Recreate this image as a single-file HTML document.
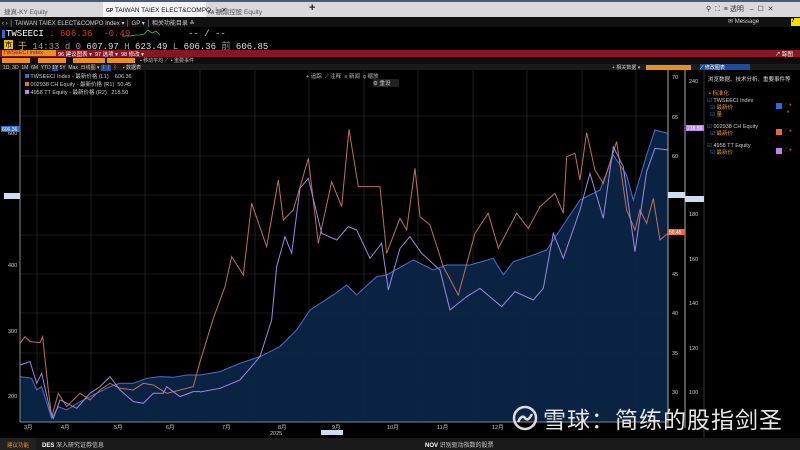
<!DOCTYPE html>
<html><head><meta charset="utf-8"><style>
*{margin:0;padding:0;box-sizing:border-box}
body{width:800px;height:450px;background:#000;overflow:hidden;position:relative;font-family:"Liberation Sans","Noto Sans CJK SC",sans-serif;color:#ddd}
.a{position:absolute;white-space:nowrap}
.t{font-size:6px}
</style></head><body>
<!-- tab bar -->
<div class="a" style="left:0;top:0;width:800px;height:17px;background:#d9d9d9;border-top:2px solid #4a5a7a"></div>
<div class="a t" style="left:4px;top:6px;color:#555;font-size:6.5px">捷真-KY Equity</div>
<div class="a" style="left:103px;top:2px;width:103px;height:15px;background:#f4f4f4"></div>
<div class="a t" style="left:106px;top:6px;color:#111;font-size:6.5px"><b style="font-size:5px">GP</b> TAIWAN TAIEX ELECT&amp;COMPO ⋮ ✕</div>
<div class="a t" style="left:208px;top:6px;color:#555;font-size:6.5px"><b style="font-size:5px">FA</b> 鵬鼎控股 Equity</div>
<div class="a" style="left:309px;top:2px;color:#222;font-size:11px;font-weight:bold">+</div>
<div class="a t" style="left:706px;top:4px;color:#333;font-size:7px">⚲ &nbsp;⛶ &nbsp;≡ 透明 &nbsp;&nbsp;– &nbsp;☐ &nbsp;✕</div>
<!-- nav -->
<div class="a" style="left:0;top:17px;width:800px;height:10px;background:#111"></div>
<div class="a t" style="left:2px;top:18px;color:#ccc">‹ › │ TAIWAN TAIEX ELECT&amp;COMPO Index ▾ │ GP ▾ │ 相关功能目录 ≚</div>
<div class="a t" style="left:728px;top:18px;color:#ccc">✉ Message</div>
<div class="a" style="left:791px;top:18px;width:9px;height:8px;background:#f0e000;color:#000;font-size:6px;font-weight:bold">?</div>
<!-- ticker -->
<div class="a" style="left:2px;top:30px;width:3px;height:8px;background:#2a6ed0"></div>
<div class="a" style="left:6px;top:29px;font-size:9px;color:#fff;font-family:'Liberation Mono',monospace">TWSEECI <span style="color:#e03030">↓ 606.36 &nbsp;-0.49</span></div>
<svg class="a" style="left:122px;top:29px" width="40" height="9"><polyline points="0,7 8,7 14,6 18,6 22,5 26,1 30,4 34,2 38,6" fill="none" stroke="#3c3" stroke-width=".8"/></svg>
<div class="a" style="left:188px;top:29px;font-size:9px;color:#ccc;font-family:'Liberation Mono',monospace">-- / --</div>
<div class="a" style="left:4px;top:40px;width:9px;height:9px;background:#e8c000;color:#000;font-size:7px;text-align:center">市</div>
<div class="a" style="left:18px;top:39px;font-size:9px;color:#ddd;font-family:'Liberation Mono',monospace"><span style="color:#e8c000">于</span> <span style="color:#999">14:33 d 0</span> 607.97 <span style="color:#999">H</span> 623.49 <span style="color:#999">L</span> 606.36 <span style="color:#999">前</span> 606.85</div>
<!-- red bar -->
<div class="a" style="left:0;top:50px;width:800px;height:7px;background:#8a1624"></div>
<div class="a" style="left:2px;top:50px;width:54px;height:6px;background:#e89020"></div>
<div class="a" style="left:3px;top:50px;font-size:5.5px;color:#8a1624">TWSEECI Index</div>
<div class="a" style="left:58px;top:50px;font-size:5.5px;color:#fff">96 建议图表 ▾ &nbsp;97 选项 ▾ &nbsp;98 修改 ▾</div>
<div class="a" style="left:775px;top:50px;font-size:5.5px;color:#fff">↗ 踪图</div>
<!-- toolbar -->
<div class="a" style="left:0;top:57px;width:800px;height:7px;background:#0d0d0d"></div>
<div class="a" style="left:2px;top:58px;width:28px;height:5px;background:#e89020"></div>
<div class="a" style="left:38px;top:58px;width:28px;height:5px;background:#e89020"></div>
<div class="a" style="left:73px;top:58px;width:32px;height:5px;background:#e89020"></div>
<div class="a" style="left:107px;top:58px;width:28px;height:5px;background:#e89020"></div>
<div class="a" style="left:140px;top:57px;font-size:5px;color:#bbb">▪ 移动平均 ⟋ &nbsp;▪ 重要事件</div>
<div class="a" style="left:0;top:64px;width:800px;height:6px;background:#1a1a1a"></div>
<div class="a" style="left:3px;top:64px;font-size:5px;color:#ccc">1D &nbsp;3D &nbsp;1M &nbsp;6M &nbsp;YTD <span style="background:#1e4d9a">1Y</span> 5Y &nbsp;Max &nbsp;日线图 ▾ <span style="background:#1e4d9a">⌇⌇</span> ⌇ &nbsp;&nbsp;&nbsp;▪ 数据表</div>
<div class="a" style="left:612px;top:64px;font-size:5px;color:#ccc">+ 相关数据 ▾</div>
<div class="a" style="left:646px;top:65px;width:45px;height:5px;background:#e89020"></div>
<div class="a" style="left:700px;top:64px;width:50px;height:6px;background:#1e4d9a;font-size:5px;color:#fff">⟋ 修改图表</div>
<!-- chart -->
<svg class="a" style="left:0;top:70px" width="705" height="368" viewBox="0 70 705 368">
<g stroke="#333" stroke-width=".6">
<line x1="20" y1="116" x2="668" y2="116"/><line x1="20" y1="156" x2="668" y2="156"/><line x1="20" y1="195" x2="668" y2="195"/><line x1="20" y1="235" x2="668" y2="235"/><line x1="20" y1="274" x2="668" y2="274"/><line x1="20" y1="313" x2="668" y2="313"/><line x1="20" y1="353" x2="668" y2="353"/><line x1="20" y1="392" x2="668" y2="392"/>
<line x1="37" y1="70" x2="37" y2="422"/><line x1="91" y1="70" x2="91" y2="422"/><line x1="145" y1="70" x2="145" y2="422"/><line x1="200" y1="70" x2="200" y2="422"/><line x1="255" y1="70" x2="255" y2="422"/><line x1="309" y1="70" x2="309" y2="422"/><line x1="364" y1="70" x2="364" y2="422"/><line x1="418" y1="70" x2="418" y2="422"/><line x1="473" y1="70" x2="473" y2="422"/><line x1="527" y1="70" x2="527" y2="422"/><line x1="582" y1="70" x2="582" y2="422"/><line x1="636" y1="70" x2="636" y2="422"/>
</g>
<g transform="translate(0,100) scale(0.3333)">
<polygon fill="#0c2547" fill-opacity=".95" stroke="none" points="60,966 60,830 95,835 110,870 125,860 155,955 175,920 200,930 240,905 280,885 330,860 360,850 400,850 440,835 480,830 520,832 560,825 601,825 601,966"/>
<polyline fill="none" stroke="#4a6fd0" stroke-width="3" points="60,830 95,835 110,870 125,860 155,955 175,920 200,930 240,905 280,885 330,860 360,850 400,850 440,835 480,830 520,832 560,825 600,825"/>
<polyline fill="none" stroke="#c0705a" stroke-width="3" points="60,730 75,710 90,725 120,728 128,710 145,870 155,950 175,880 200,920 240,880 270,900 300,870 330,850 360,865 400,870 430,850 460,855 500,880 540,870 580,860 600,785"/>
<polyline fill="none" stroke="#9a88e0" stroke-width="3" points="60,795 90,785 110,850 125,820 150,930 160,955 180,900 230,925 270,880 300,860 330,830 360,870 400,905 430,910 460,880 490,880 500,860 540,890 580,875 600,875"/>
</g>
<g transform="translate(200,100) scale(0.3333)">
<polygon fill="#0c2547" fill-opacity=".95" stroke="none" points="0,966 0,825 60,815 120,790 180,770 240,740 290,690 330,630 400,585 440,555 470,585 530,530 560,525 640,480 700,510 740,495 810,495 880,475 910,525 940,485 1000,465 1040,450 1090,375 1140,300 1200,270 1240,165 1280,225 1300,300 1340,165 1365,90 1404,100 1404,966"/>
<polyline fill="none" stroke="#4a6fd0" stroke-width="3" points="0,825 60,815 120,790 180,770 240,740 290,690 330,630 400,585 440,555 470,585 530,530 560,525 640,480 700,510 740,495 810,495 880,475 910,525 940,485 1000,465 1040,450 1090,375 1140,300 1200,270 1240,165 1280,225 1300,300 1340,165 1365,90 1404,100"/>
<polyline fill="none" stroke="#c0705a" stroke-width="3" points="0,786 40,655 75,560 95,470 130,525 155,310 200,440 235,240 250,360 280,330 325,175 355,430 395,245 425,320 447,88 475,260 540,260 560,460 600,355 620,390 645,205 660,350 690,375 730,500 775,585 825,400 865,340 895,445 950,340 985,385 1020,320 1065,280 1090,340 1100,170 1125,160 1140,240 1160,98 1185,210 1210,250 1250,125 1280,330 1305,390 1320,330 1340,370 1360,295 1380,420 1404,400"/>
<polyline fill="none" stroke="#9a88e0" stroke-width="3" points="0,876 60,865 120,840 180,770 215,660 230,500 255,410 275,460 300,265 325,235 365,400 410,420 445,380 470,390 510,475 545,430 565,570 600,445 630,410 665,460 720,510 750,630 800,590 840,565 905,620 945,575 1000,600 1030,565 1060,400 1090,475 1140,330 1170,220 1210,355 1240,140 1270,200 1305,455 1340,215 1365,145 1404,150"/>
</g>
<line x1="20" y1="70" x2="20" y2="422" stroke="#aaa" stroke-width=".8"/>
<line x1="20" y1="422" x2="668" y2="422" stroke="#aaa" stroke-width=".8"/>
<line x1="668" y1="70" x2="668" y2="428" stroke="#aaa" stroke-width="1"/>
<line x1="685" y1="70" x2="685" y2="428" stroke="#aaa" stroke-width="1"/>
<line x1="704" y1="70" x2="704" y2="438" stroke="#333" stroke-width="1"/>
<g fill="#ccc" font-size="5.5" font-family="Liberation Sans,Noto Sans CJK SC,sans-serif">
<text x="8" y="135">600</text><text x="8" y="267">400</text><text x="8" y="333">300</text><text x="8" y="398">200</text>
<text x="672" y="79">70</text><text x="672" y="119">65</text><text x="672" y="158">60</text><text x="672" y="276">45</text><text x="672" y="315">40</text><text x="672" y="355">35</text><text x="672" y="394">30</text>
<text x="689" y="83">240</text><text x="689" y="216">180</text><text x="689" y="261">160</text><text x="689" y="305">140</text><text x="689" y="350">120</text><text x="689" y="394">100</text>
<text x="24" y="429">3月</text><text x="61" y="429">4月</text><text x="114" y="429">5月</text><text x="166" y="429">6月</text><text x="222" y="429">7月</text><text x="278" y="429">8月</text><text x="332" y="429">9月</text><text x="387" y="429">10月</text><text x="437" y="429">11月</text><text x="492" y="429">12月</text><text x="270" y="435">2025</text>
</g>
<rect x="321" y="430" width="22" height="5" fill="#cde"/>
<rect x="1" y="126" width="19" height="6" fill="#2a6ed0"/><text x="2" y="131" font-size="5" fill="#fff">606.36</text>
<rect x="4" y="193" width="16" height="6" fill="#cde"/>
<rect x="668" y="192" width="17" height="6" fill="#cde"/>
<rect x="685" y="196" width="19" height="6" fill="#cde"/>
<rect x="668" y="229" width="17" height="6" fill="#e86a40"/><text x="669" y="234" font-size="5" fill="#fff">50.45</text>
<rect x="686" y="125" width="18" height="6" fill="#c080f0"/><text x="687" y="130" font-size="5" fill="#fff">218.50</text>
</svg>
<!-- legend -->
<div class="a" style="left:25px;top:73px;font-size:5.5px;color:#ccc;line-height:8px">
<div><span style="display:inline-block;width:4px;height:4px;background:#2a6ed0"></span> TWSEECI Index - 最新价格 (L1) &nbsp;&nbsp;&nbsp;606.36</div>
<div><span style="display:inline-block;width:4px;height:4px;background:#e86a40"></span> 002938 CH Equity - 最新价格 (R1) &nbsp;50.45</div>
<div><span style="display:inline-block;width:4px;height:4px;background:#c080f0"></span> 4958 TT Equity - 最新价格 (R2) &nbsp;&nbsp;218.50</div>
</div>
<div class="a" style="left:306px;top:72px;font-size:5.5px;color:#bbb">+ 追踪 &nbsp;⟋ 注释 &nbsp;≡ 新闻 &nbsp;⚲ 缩放</div>
<div class="a" style="left:373px;top:79px;width:26px;height:8px;background:#222;font-size:5.5px;color:#ccc">⚙ 重设</div>
<!-- sidebar -->
<div class="a" style="left:708px;top:76px;font-size:5.5px;color:#ddd;line-height:9px">浏览数据、技术分析、重要事件等</div>
<div class="a" style="left:709px;top:89px;font-size:5.5px;color:#e89020">▪ <span>标准化</span></div>
<div class="a" style="left:707px;top:98px;font-size:5.5px;color:#ccc;line-height:7px"><span style="color:#3a8ae0">☑</span> TWSEECI Index<br>&nbsp;&nbsp;<span style="color:#3a8ae0">☑</span> <span style="color:#e89020">最新价</span><br>&nbsp;&nbsp;<span style="color:#3a8ae0">☑</span> <span style="color:#e89020">量</span></div>
<div class="a" style="left:707px;top:124px;font-size:5.5px;color:#ccc;line-height:7px"><span style="color:#3a8ae0">☑</span> 002938 CH Equity<br>&nbsp;&nbsp;<span style="color:#3a8ae0">☑</span> <span style="color:#e89020">最新价</span></div>
<div class="a" style="left:707px;top:143px;font-size:5.5px;color:#ccc;line-height:7px"><span style="color:#3a8ae0">☑</span> 4958 TT Equity<br>&nbsp;&nbsp;<span style="color:#3a8ae0">☑</span> <span style="color:#e89020">最新价</span></div>
<div class="a" style="left:776px;top:103px;width:6px;height:6px;background:#2a6ed0"></div>
<div class="a" style="left:776px;top:129px;width:6px;height:6px;background:#e86a40"></div>
<div class="a" style="left:776px;top:148px;width:6px;height:6px;background:#c080f0"></div>
<div class="a" style="left:784px;top:102px;font-size:5px;color:#c33;line-height:7px">⟋ ●<br>&nbsp;&nbsp;●</div>
<div class="a" style="left:784px;top:128px;font-size:5px;color:#c33">⟋ ●</div>
<div class="a" style="left:784px;top:147px;font-size:5px;color:#c33">⟋ ●</div>
<!-- watermark -->
<svg class="a" style="left:512px;top:405px" width="26" height="26"><circle cx="13" cy="13" r="11" fill="none" stroke="#ddd" stroke-width="2.5"/><path d="M6 17 Q10 9 13 13 Q16 17 20 9" fill="none" stroke="#ddd" stroke-width="2.5"/></svg>
<div class="a" style="left:543px;top:405px;font-size:23px;color:#e6e6e6;font-family:'Noto Sans CJK SC',sans-serif;line-height:26px;letter-spacing:1px">雪球：简练的股指剑圣</div>
<!-- bottom -->
<div class="a" style="left:0;top:438px;width:800px;height:12px;background:#1a1a1a"></div>
<div class="a" style="left:0;top:438px;width:36px;height:12px;background:#222"></div>
<div class="a" style="left:7px;top:441px;font-size:5.5px;color:#e89020">建议功能</div>
<div class="a" style="left:42px;top:440px;font-size:6px;color:#ccc"><b style="color:#fff">DES</b> 深入研究证券信息</div>
<div class="a" style="left:425px;top:440px;font-size:6px;color:#ccc"><b style="color:#fff">NOV</b> 识别驱动指数的股票</div>
</body></html>
